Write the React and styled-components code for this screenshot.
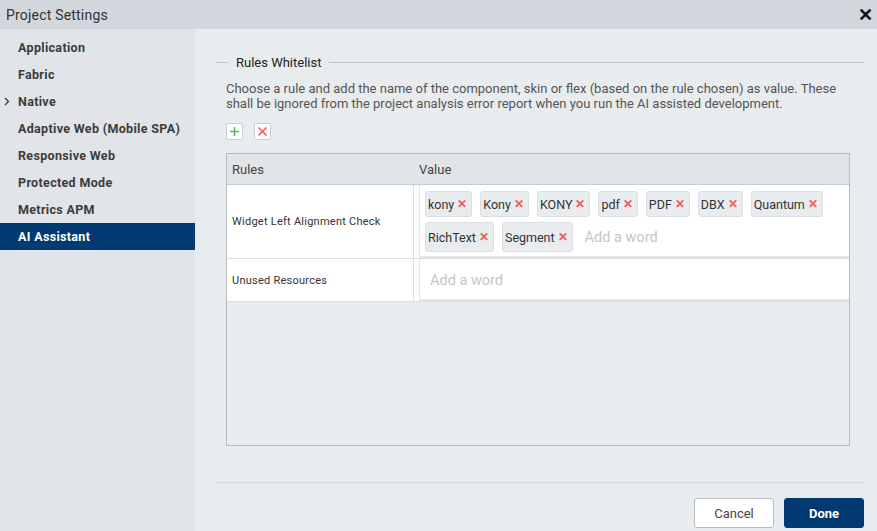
import React from 'react'
import styled, { createGlobalStyle } from 'styled-components';

const Global = createGlobalStyle`
  html, body { margin: 0; padding: 0; }
  body {
    font-family: Roboto, "Liberation Sans", sans-serif;
    background: #e9ecef;
    color: #333;
  }
  * { box-sizing: border-box; }
`;

const Dialog = styled.div`
  width: 877px;
  height: 531px;
  display: flex;
  flex-direction: column;
  overflow: hidden;
`;

const TitleBar = styled.div`
  height: 29px;
  flex: none;
  display: flex;
  align-items: center;
  justify-content: space-between;
  padding: 0 4px 0 6px;
  background: #d2d7dd;
  font-size: 14px;
  color: #333;
  letter-spacing: 0.2px;
`;

const Close = styled.span`
  font-size: 18px;
  font-weight: 700;
  color: #111;
  line-height: 1;
`;

const Body = styled.div`
  flex: 1;
  display: flex;
  min-height: 0;
`;

const Sidebar = styled.nav`
  width: 195px;
  flex: none;
  background: #e1e4e8;
  padding-top: 5px;
  display: flex;
  flex-direction: column;
`;

const NavItem = styled.div`
  position: relative;
  height: 27px;
  display: flex;
  align-items: center;
  padding-left: 18px;
  font-size: 12.5px;
  font-weight: 700;
  letter-spacing: 0.33px;
  color: ${({ $active }) => ($active ? '#fff' : '#3c3c3c')};
  background: ${({ $active }) => ($active ? '#003a70' : 'transparent')};
`;

const Chevron = styled.svg`
  position: absolute;
  left: 4px;
  top: 9px;
`;

const Main = styled.main`
  flex: 1;
  display: flex;
  flex-direction: column;
  background: #e9ecef;
  padding: 0 13px 0 21px;
`;

const Legend = styled.div`
  display: flex;
  align-items: center;
  margin-top: 26px;
  font-size: 13px;
  color: #222;
  &::before {
    content: '';
    width: 12px;
    height: 1px;
    background: #c4c8cc;
    margin-right: 8px;
  }
  &::after {
    content: '';
    flex: 1;
    height: 1px;
    background: #c4c8cc;
    margin-left: 8px;
  }
`;

const Content = styled.div`
  padding: 0 14px 0 10px;
  display: flex;
  flex-direction: column;
`;

const Desc = styled.p`
  margin: 11px 0 0;
  font-size: 13px;
  line-height: 15px;
  color: #555;
`;

const Tools = styled.div`
  display: flex;
  gap: 11px;
  margin-top: 12px;
`;

const IconBtn = styled.button`
  width: 17px;
  height: 17px;
  padding: 0;
  border: 1px solid #ccc;
  border-radius: 2px;
  background: #fff;
  display: flex;
  align-items: center;
  justify-content: center;
`;

const Table = styled.div`
  margin-top: 13px;
  height: 293px;
  border: 1px solid #b9bcbf;
  background: #e9ecef;
  display: flex;
  flex-direction: column;
`;

const HeadRow = styled.div`
  height: 31px;
  display: flex;
  align-items: center;
  background: #e2e5e8;
  border-bottom: 1px solid #c8cbce;
  font-size: 13px;
  color: #444;
`;

const HeadCell = styled.div`
  width: ${({ $w }) => $w || 'auto'};
  padding-left: 5px;
`;

const Row = styled.div`
  display: flex;
  background: #fff;
  border-bottom: 1px solid #dcdfe2;
`;

const RuleCell = styled.div`
  width: 187px;
  flex: none;
  display: flex;
  align-items: center;
  padding-left: 5px;
  font-size: 11px;
  color: #333;
  letter-spacing: 0.25px;
  border-right: 1px solid #dcdfe2;
`;

const TagBox = styled.div`
  flex: 1;
  display: flex;
  flex-wrap: wrap;
  align-items: stretch;
  gap: 5px 8px;
  padding: 6px 5px 4px 5px;
  min-height: ${({ $min }) => $min}px;
  margin-left: 5px;
  border-left: 1px solid #e3e5e8;
  border-bottom: 2px solid #e3e5e8;
`;

const Tag = styled.span`
  display: inline-flex;
  align-items: center;
  min-height: 26px;
  padding: 0 4px 0 2px;
  background: #e9ecef;
  border: 1px solid #dcdfe2;
  border-radius: 3px;
  font-size: 12.5px;
  color: #333;
`;

const TagX = styled.span`
  color: #f25a5a;
  font-weight: 700;
  font-size: 12px;
  margin-left: 3px;
`;

const Placeholder = styled.span`
  display: flex;
  align-items: center;
  font-size: 14.5px;
  min-height: 30px;
  color: #c3c6c9;
  padding-left: ${({ $pad }) => $pad}px;
`;

const Footer = styled.div`
  margin-top: auto;
  border-top: 1px solid #d5d8db;
  height: 49px;
  display: flex;
  justify-content: flex-end;
  align-items: flex-start;
  gap: 10px;
  padding-top: 15px;
`;

const Button = styled.button`
  width: 80px;
  height: 30px;
  border-radius: 3px;
  font-family: inherit;
  font-size: 13px;
  border: 1px solid ${({ $primary }) => ($primary ? '#003a70' : '#b9bcbf')};
  background: ${({ $primary }) => ($primary ? '#003a70' : '#fff')};
  color: ${({ $primary }) => ($primary ? '#fff' : '#444')};
  font-weight: ${({ $primary }) => ($primary ? 700 : 400)};
`;

const navItems = [
  'Application',
  'Fabric',
  'Native',
  'Adaptive Web (Mobile SPA)',
  'Responsive Web',
  'Protected Mode',
  'Metrics APM',
  'AI Assistant',
];

const tags = ['kony', 'Kony', 'KONY', 'pdf', 'PDF', 'DBX', 'Quantum', 'RichText', 'Segment'];

const App = () => {
  return (
    <Dialog>
      <Global />
      <TitleBar>
        <span>Project Settings</span>
        <Close>✕</Close>
      </TitleBar>
      <Body>
        <Sidebar>
          {navItems.map((n) => (
            <NavItem key={n} $active={n === 'AI Assistant'}>
              {n === 'Native' && (
                <Chevron width="6" height="9" viewBox="0 0 6 9">
                  <path d="M1 1l3.5 3.5L1 8" fill="none" stroke="#333" strokeWidth="1.2" />
                </Chevron>
              )}
              {n}
            </NavItem>
          ))}
        </Sidebar>
        <Main>
          <Legend>Rules Whitelist</Legend>
          <Content>
            <Desc>
              Choose a rule and add the name of the component, skin or flex (based on the rule chosen) as value. These
              shall be ignored from the project analysis error report when you run the AI assisted development.
            </Desc>
            <Tools>
              <IconBtn aria-label="add">
                <svg width="11" height="11" viewBox="0 0 11 11">
                  <path d="M5.5 1v9M1 5.5h9" stroke="#5cb85c" strokeWidth="1.6" />
                </svg>
              </IconBtn>
              <IconBtn aria-label="remove">
                <svg width="11" height="11" viewBox="0 0 11 11">
                  <path d="M1.5 1.5l8 8M9.5 1.5l-8 8" stroke="#f25a5a" strokeWidth="1.6" />
                </svg>
              </IconBtn>
            </Tools>
            <Table>
              <HeadRow>
                <HeadCell $w="187px">Rules</HeadCell>
                <HeadCell>Value</HeadCell>
              </HeadRow>
              <Row>
                <RuleCell>Widget Left Alignment Check</RuleCell>
                <TagBox $min={71}>
                  {tags.map((t) => (
                    <Tag key={t}>
                      {t}
                      <TagX>✕</TagX>
                    </Tag>
                  ))}
                  <Placeholder $pad={4}>Add a word</Placeholder>
                </TagBox>
              </Row>
              <Row>
                <RuleCell>Unused Resources</RuleCell>
                <TagBox $min={41}>
                  <Placeholder $pad={5}>Add a word</Placeholder>
                </TagBox>
              </Row>
            </Table>
          </Content>
          <Footer>
            <Button>Cancel</Button>
            <Button $primary>Done</Button>
          </Footer>
        </Main>
      </Body>
    </Dialog>
  )
}

export default App;
